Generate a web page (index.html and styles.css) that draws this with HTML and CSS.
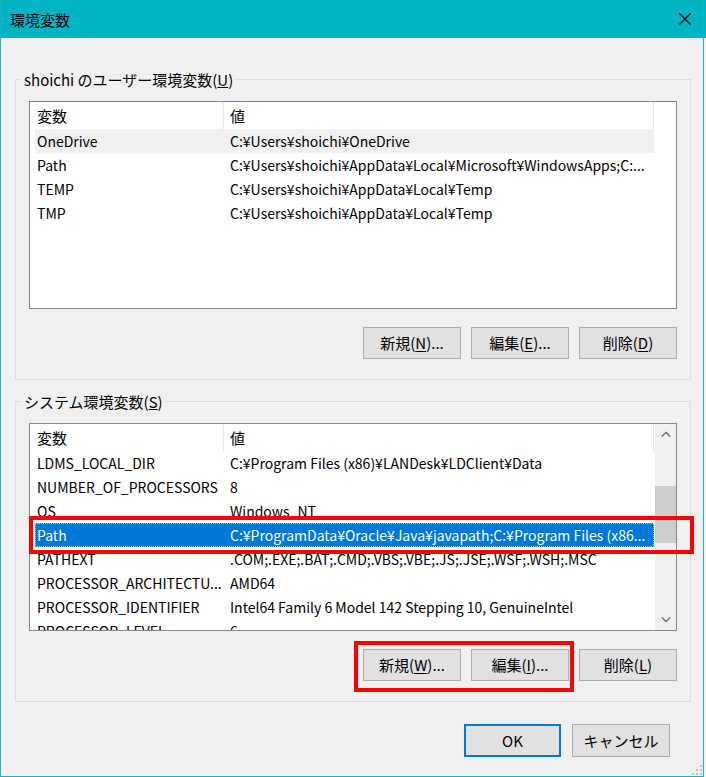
FILE: index.html
```html
<!DOCTYPE html>
<html lang="ja">
<head>
<meta charset="utf-8">
<title>環境変数</title>
<link rel="stylesheet" href="styles.css">
</head>
<body>
<div class="window">
  <div class="titlebar">
    <span class="title">環境変数</span>
    <svg class="close" width="12" height="12" viewBox="0 0 12 12"><path d="M0.5 0.5L11.5 11.5M11.5 0.5L0.5 11.5" stroke="#000" stroke-width="1.1" fill="none"/></svg>
  </div>
  <div class="content">
    <fieldset class="group">
      <legend>shoichi のユーザー環境変数(<u>U</u>)</legend>
      <div class="group-body">
        <div class="listview">
          <div class="lv-main">
            <div class="lv-head"><div class="hcell">変数</div><div class="hcell">値</div><div class="hcell"></div></div>
            <div class="lv-row soft"><span class="c1">OneDrive</span><span class="c2">C:¥Users¥shoichi¥OneDrive</span></div>
            <div class="lv-row"><span class="c1">Path</span><span class="c2">C:¥Users¥shoichi¥AppData¥Local¥Microsoft¥WindowsApps;C:...</span></div>
            <div class="lv-row"><span class="c1">TEMP</span><span class="c2">C:¥Users¥shoichi¥AppData¥Local¥Temp</span></div>
            <div class="lv-row"><span class="c1">TMP</span><span class="c2">C:¥Users¥shoichi¥AppData¥Local¥Temp</span></div>
          </div>
        </div>
        <div class="btnrow">
          <button class="btn">新規(<u>N</u>)...</button>
          <button class="btn">編集(<u>E</u>)...</button>
          <button class="btn">削除(<u>D</u>)</button>
        </div>
      </div>
    </fieldset>

    <fieldset class="group">
      <legend>システム環境変数(<u>S</u>)</legend>
      <div class="group-body">
        <div class="listview">
          <div class="lv-main">
            <div class="lv-head"><div class="hcell">変数</div><div class="hcell">値</div><div class="hcell"></div></div>
            <div class="lv-row"><span class="c1">LDMS_LOCAL_DIR</span><span class="c2">C:¥Program Files (x86)¥LANDesk¥LDClient¥Data</span></div>
            <div class="lv-row"><span class="c1">NUMBER_OF_PROCESSORS</span><span class="c2">8</span></div>
            <div class="lv-row"><span class="c1">OS</span><span class="c2">Windows_NT</span></div>
            <div class="lv-row sel"><span class="c1">Path</span><span class="c2">C:¥ProgramData¥Oracle¥Java¥javapath;C:¥Program Files (x86...</span></div>
            <div class="lv-row"><span class="c1">PATHEXT</span><span class="c2">.COM;.EXE;.BAT;.CMD;.VBS;.VBE;.JS;.JSE;.WSF;.WSH;.MSC</span></div>
            <div class="lv-row"><span class="c1">PROCESSOR_ARCHITECTU...</span><span class="c2">AMD64</span></div>
            <div class="lv-row"><span class="c1">PROCESSOR_IDENTIFIER</span><span class="c2">Intel64 Family 6 Model 142 Stepping 10, GenuineIntel</span></div>
            <div class="lv-row"><span class="c1">PROCESSOR_LEVEL</span><span class="c2">6</span></div>
          </div>
          <div class="scrollbar">
            <div class="sb-btn"><svg width="10" height="7" viewBox="0 0 10 7"><polyline points="0.8,5.6 5,1.4 9.2,5.6" fill="none" stroke="#606060" stroke-width="1.3"/></svg></div>
            <div class="sb-thumb"></div>
            <div class="sb-fill"></div>
            <div class="sb-btn"><svg width="10" height="7" viewBox="0 0 10 7"><polyline points="0.8,1.4 5,5.6 9.2,1.4" fill="none" stroke="#606060" stroke-width="1.3"/></svg></div>
          </div>
        </div>
        <div class="btnrow">
          <button class="btn">新規(<u>W</u>)...</button>
          <button class="btn">編集(<u>I</u>)...</button>
          <button class="btn">削除(<u>L</u>)</button>
        </div>
      </div>
    </fieldset>

    <div class="footer">
      <button class="btn ok">OK</button>
      <button class="btn cancel">キャンセル</button>
    </div>
  </div>

  <div class="mark mark-row"></div>
  <div class="mark mark-btns"></div>

  <svg class="grip" width="12" height="12" viewBox="0 0 12 12">
    <rect x="10" y="2" width="2" height="2" fill="#c2c2c2"/>
    <rect x="6" y="6" width="2" height="2" fill="#c2c2c2"/>
    <rect x="10" y="6" width="2" height="2" fill="#c2c2c2"/>
    <rect x="2" y="10" width="2" height="2" fill="#c2c2c2"/>
    <rect x="6" y="10" width="2" height="2" fill="#c2c2c2"/>
    <rect x="10" y="10" width="2" height="2" fill="#c2c2c2"/>
  </svg>
</div>
</body>
</html>
```

FILE: styles.css
```css
html {
  background: linear-gradient(#00b4c4 0, #00b4c4 38px, #f0f0f0 38px);
  min-height: 100%;
}
body {
  margin: 0;
  font-family: "Noto Sans CJK JP", "Noto Sans", sans-serif;
  font-size: 15px;
  color: #000;
}
.window {
  position: relative;
  width: 704px;
  height: 777px;
  box-sizing: border-box;
  border: 1px solid #18b4c4;
  border-top: 0;
  background: #f0f0f0;
}
.titlebar {
  height: 38px;
  background: #00b4c4;
  display: flex;
  align-items: center;
  justify-content: space-between;
  padding: 0 12px 0 9px;
}
.title {
  line-height: 20px;
  padding-top: 1px;
}
.close {
  display: block;
}
.content {
  padding: 31px 12px 0 14px;
}
.group {
  margin: 0;
  padding: 0;
  border: 1px solid #dcdcdc;
  min-width: 0;
}
.group + .group {
  margin-top: 11px;
}
.group legend {
  margin-left: 5px;
  padding: 0 3px;
  line-height: 21px;
}
.group-body {
  padding: 11px 13px 20px;
}
.listview {
  height: 208px;
  box-sizing: border-box;
  border: 1px solid #828790;
  background: #fff;
  display: flex;
  overflow: hidden;
}
.lv-main {
  flex: 1;
  min-width: 0;
  overflow: hidden;
}
.lv-head {
  display: grid;
  grid-template-columns: 194px 430px 1fr;
  height: 27px;
}
.hcell {
  border-right: 1px solid #e5e5e5;
  line-height: 27px;
  padding-left: 7px;
  white-space: nowrap;
  overflow: hidden;
}
.hcell:nth-child(2) {
  padding-left: 6px;
}
.hcell:last-child {
  border-right: 0;
}
.lv-row {
  display: grid;
  grid-template-columns: 193px 426px;
  width: 619px;
  margin-left: 5px;
  height: 24px;
  line-height: 24px;
  font-size: 14px;
  box-sizing: border-box;
}
.lv-row span {
  padding-left: 2px;
  white-space: nowrap;
  overflow: hidden;
}
.lv-row.soft {
  background: #f0f0f0;
}
.lv-row.sel {
  background: #0078d7;
  color: #fff;
  outline: 1px dotted #9cc9ef;
  outline-offset: -1px;
}
.scrollbar {
  width: 21px;
  flex: none;
  background: #f0f0f0;
  display: flex;
  flex-direction: column;
}
.sb-btn {
  height: 21px;
  display: flex;
  align-items: center;
  justify-content: center;
}
.sb-btn svg {
  display: block;
}
.sb-thumb {
  margin-top: 41px;
  height: 57px;
  background: #cdcdcd;
}
.sb-fill {
  flex: 1;
}
.btnrow {
  display: flex;
  justify-content: flex-end;
  gap: 10px;
  margin-top: 18px;
}
.btn {
  width: 98px;
  height: 32px;
  box-sizing: border-box;
  border: 1px solid #adadad;
  background: #e1e1e1;
  font-family: "Noto Sans CJK JP", "Noto Sans", sans-serif;
  font-size: 15px;
  color: #000;
  padding: 0;
  line-height: 20px;
}
.btn u {
  text-underline-offset: 2px;
}
.footer {
  display: flex;
  justify-content: flex-end;
  gap: 11px;
  margin-top: 22px;
  padding-right: 21px;
}
.footer .btn {
  height: 33px;
}
.btn.ok {
  width: 97px;
  border: 2px solid #0078d7;
}
.mark {
  position: absolute;
  border: 4px solid #ff0000;
  box-sizing: border-box;
}
.mark-row {
  left: 28px;
  top: 516px;
  width: 665px;
  height: 38px;
}
.mark-btns {
  left: 353px;
  top: 641px;
  width: 220px;
  height: 51px;
}
.grip {
  position: absolute;
  right: 1px;
  bottom: 1px;
}
```
